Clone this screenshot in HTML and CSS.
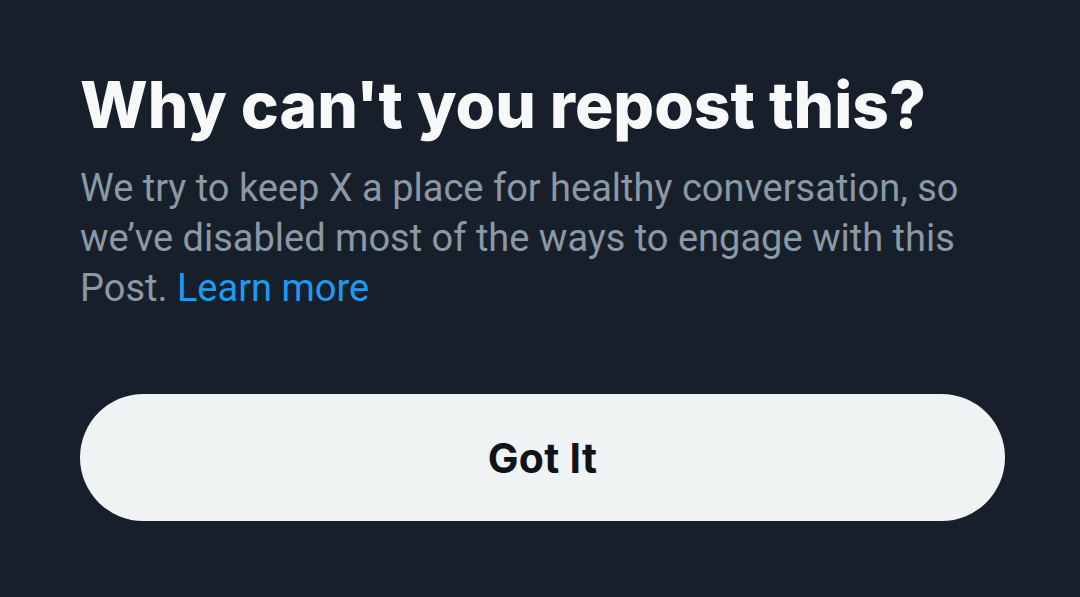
FILE: index.html
```html
<!DOCTYPE html>
<html>
<head>
<meta charset="utf-8">
<link rel="stylesheet" href="styles.css">
</head>
<body>
<div class="sheet">
  <h1 class="title">Why can't you repost this?</h1>
  <p class="desc">We try to keep X a place for healthy conversation, so we’ve disabled most of the ways to engage with this Post. <a class="link" href="#">Learn more</a></p>
  <button class="btn">Got It</button>
</div>
</body>
</html>
```
FILE: styles.css
```css
html, body {
  margin: 0;
  padding: 0;
  background: #17202a;
  width: 1080px;
  height: 597px;
  overflow: hidden;
}
.sheet {
  padding: 67px 77px 0 80px;
  display: flex;
  flex-direction: column;
  font-family: Inter, "Noto Sans", sans-serif;
}
.title {
  margin: 0;
  font-size: 64px;
  font-weight: 800;
  line-height: 76px;
  color: #f7f9f9;
}
.desc {
  margin: 20px 0 0 0;
  font-family: Roboto, "Noto Sans", sans-serif;
  font-size: 38px;
  line-height: 50px;
  color: #8b98a5;
  font-weight: 400;
  max-width: 910px;
}
.link {
  color: #1d9bf0;
  text-decoration: none;
}
.btn {
  margin-top: 81px;
  width: 925px;
  height: 127px;
  border: none;
  border-radius: 64px;
  background: #eff3f4;
  color: #0f1419;
  font-family: Inter, "Noto Sans", sans-serif;
  font-size: 41px;
  font-weight: 700;
  letter-spacing: 0.3px;
  padding: 0;
}
```
